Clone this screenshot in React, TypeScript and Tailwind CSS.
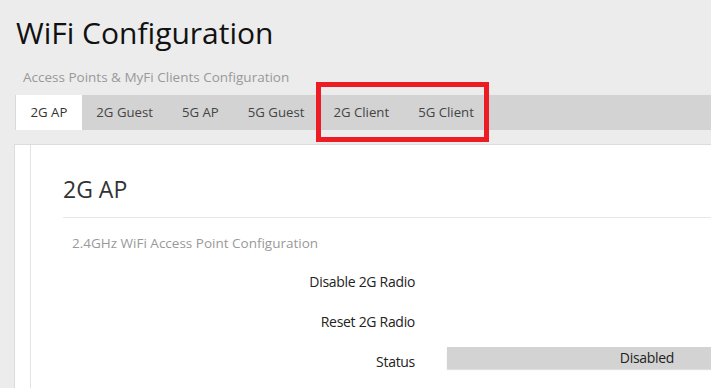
import React from "react";

const tabs = ["2G AP", "2G Guest", "5G AP", "5G Guest", "2G Client", "5G Client"];

export default function App() {
  return (
    <div
      className="relative w-[711px] h-[388px] overflow-hidden bg-[#ececec] text-[#333]"
      style={{ fontFamily: '"Open Sans", "Noto Sans", sans-serif' }}
    >
      <div className="pl-[16px] pt-[13px]">
        <h1 className="text-[30px] leading-[40px] text-[#111]">WiFi Configuration</h1>
      </div>
      <div className="pl-[23px] mt-[15px] text-[13.5px] leading-[18px] text-[#999]">
        Access Points &amp; MyFi Clients Configuration
      </div>
      <div className="ml-[15px] mt-[9px] flex h-[35px] bg-[#d3d3d3] border-l border-[#d9d9d9]">
        {tabs.map((t, i) => (
          <div
            key={t}
            className={
              "px-[14.5px] flex items-center text-[13.2px] " +
              (i === 0 ? "bg-white text-[#333]" : "text-[#444]")
            }
          >
            {t}
          </div>
        ))}
      </div>
      <div className="ml-[14px] mt-[14px] h-[300px] bg-white border-l border-t border-[#dcdcdc] pl-[15px]">
        <div className="h-full border-l border-[#e3e3e3] pl-[32px] pt-[28px]">
          <h2 className="text-[23px] leading-[32px] text-[#333]">2G AP</h2>
          <div className="mt-[12px] border-t border-[#e6e6e6]" />
          <div className="pl-[9px] mt-[16px] text-[13.5px] leading-[18px] text-[#999]">
            2.4GHz WiFi Access Point Configuration
          </div>
          <div className="mt-[9px] flex flex-col">
            {["Disable 2G Radio", "Reset 2G Radio", "Status"].map((l, i) => (
              <div key={l} className="flex h-[40px] items-center">
                <div className="w-[352px] shrink-0 text-right text-[14px] text-[#222] tracking-[-0.3px]">{l}</div>
                {i === 2 && (
                  <div className="ml-[32px] mb-[7px] w-[400px] shrink-0 h-[22px] bg-[#d3d3d3] shadow-[0_1px_1px_rgba(0,0,0,0.12)] flex items-center justify-center text-[14px] text-[#222] tracking-[-0.3px]">
                    Disabled
                  </div>
                )}
              </div>
            ))}
          </div>
        </div>
      </div>
      <div className="absolute left-[316px] top-[82px] w-[173px] h-[60px] border-[5px] border-[#ed1c24]" />
    </div>
  );
}
